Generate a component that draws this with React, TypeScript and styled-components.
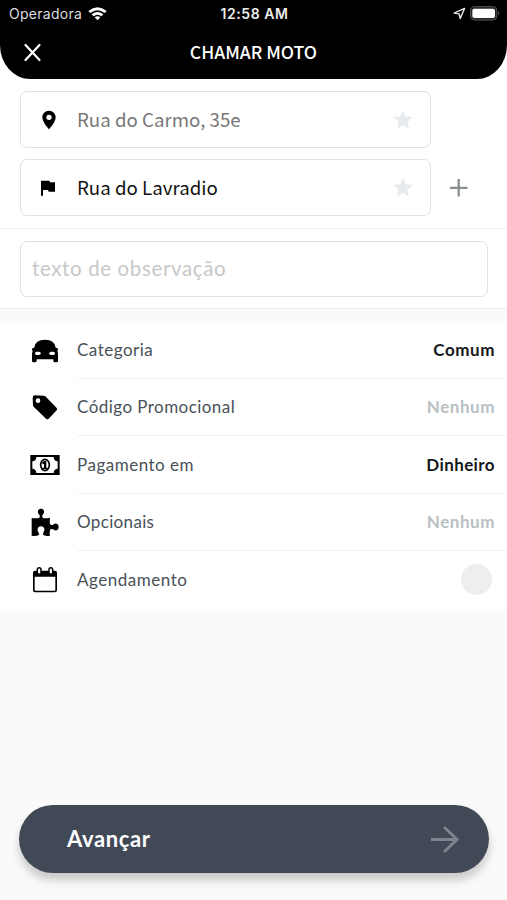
import React from "react";
import styled, { createGlobalStyle } from "styled-components";

const GlobalStyle = createGlobalStyle`
  * { box-sizing: border-box; }
  body { margin: 0; background: #fafafa; }
`;

const SYSTEM = '"Inter", "Liberation Sans", sans-serif';
const SOURCE = '"Noto Sans CJK SC", "Noto Sans", sans-serif';
const HUMANIST = '"Lato", "Open Sans", sans-serif';

const Screen = styled.div`
  width: 507px;
  height: 900px;
  display: flex;
  flex-direction: column;
  overflow: hidden;
  background: #fafafa;
  font-family: ${HUMANIST};
`;

const HeaderWrap = styled.div`
  background: #fff;
`;

const Header = styled.header`
  height: 79px;
  background: #000;
  border-radius: 0 0 30px 30px / 0 0 34px 34px;
  color: #fff;
`;

const StatusBar = styled.div`
  height: 27px;
  padding: 0 7px 0 9px;
  display: grid;
  grid-template-columns: 1fr auto 1fr;
  align-items: center;
  font-family: ${SYSTEM};
`;

const Carrier = styled.div`
  display: flex;
  align-items: center;
  gap: 6px;
  font-size: 14px;
  letter-spacing: 0.28px;
  color: #dedede;
`;

const Clock = styled.div`
  font-size: 14px;
  font-weight: 600;
  letter-spacing: 0.55px;
  color: #eee;
`;

const Indicators = styled.div`
  display: flex;
  justify-content: flex-end;
  align-items: center;
  gap: 4px;
`;

const NavBar = styled.div`
  height: 50px;
  padding: 0 23px;
  display: grid;
  grid-template-columns: 20px 1fr 20px;
  align-items: center;
`;

const Title = styled.h1`
  margin: 0;
  text-align: center;
  font: 500 17.6px/26px ${SOURCE};
`;

const IconButton = styled.button`
  padding: 0;
  border: 0;
  background: none;
  display: flex;
`;

const Addresses = styled.section`
  height: 150px;
  padding: 12px 20px 0;
  display: flex;
  flex-direction: column;
  gap: 11px;
  background: #fff;
  border-bottom: 1.5px solid #eff1f1;
`;

const AddressLine = styled.div`
  display: flex;
  align-items: center;
  gap: 18px;
`;

const Field = styled.div`
  width: 411px;
  height: 57px;
  padding: 0 17px 0 18px;
  display: flex;
  align-items: center;
  border: 1.5px solid #dfe2e2;
  border-radius: 7px;
`;

const FieldText = styled.span<{ $muted?: boolean }>`
  flex: 1;
  margin-left: 18px;
  padding-bottom: 2px;
  font: 400 18.7px/30px ${SOURCE};
  color: ${(p) => (p.$muted ? "#777" : "#111")};
`;

const Note = styled.section`
  height: 80px;
  padding: 12px 19px 0 20px;
  background: #fff;
  border-bottom: 1.5px solid #eceeee;
`;

const NoteInput = styled.input`
  display: block;
  width: 100%;
  height: 56px;
  padding: 0 11px 3px;
  border: 1.5px solid #dfe3e4;
  border-radius: 7px;
  font: 400 20.4px ${HUMANIST};
  letter-spacing: 0.68px;
  outline: none;
  &::placeholder { color: #c6c8c9; opacity: 1; }
`;

const Options = styled.section`
  margin-top: 12px;
  background: #fff;
`;

const Row = styled.div`
  height: 57.5px;
  padding-left: 30px;
  display: flex;
  align-items: center;
  gap: 17px;
`;

const RowBody = styled.div<{ $last?: boolean }>`
  flex: 1;
  height: 100%;
  padding-right: ${(p) => (p.$last ? "15px" : "12px")};
  display: flex;
  align-items: center;
  justify-content: space-between;
  border-bottom: ${(p) => (p.$last ? "0" : "1.5px solid #eff1f2")};
`;

const Label = styled.span<{ $spacing: number }>`
  font-size: 17px;
  color: #485158;
  letter-spacing: ${(p) => p.$spacing}px;
`;

const Value = styled.span<{ $empty: boolean; $spacing: number }>`
  font-size: 17px;
  font-weight: 700;
  color: ${(p) => (p.$empty ? "#b8c0c4" : "#15171a")};
  letter-spacing: ${(p) => p.$spacing}px;
`;

const Toggle = styled.button`
  width: 31px;
  height: 31px;
  padding: 0;
  border: 0;
  border-radius: 50%;
  background: #eceeef;
`;

const Footer = styled.footer`
  margin-top: auto;
  padding: 0 18px 27px 19px;
`;

const NextButton = styled.button`
  width: 100%;
  height: 68px;
  padding: 0 29px 0 48px;
  display: flex;
  align-items: center;
  justify-content: space-between;
  border: 0;
  border-radius: 34px;
  background: #414856;
  box-shadow: 0 7px 10px rgba(0, 0, 0, 0.2);
  color: #fff;
  font: 700 22px ${HUMANIST};
  letter-spacing: 0.6px;
`;

const NextLabel = styled.span`
  padding-bottom: 1px;
`;

const Wifi = () => (
  <svg width="19" height="14" viewBox="0 0 57 42" fill="#fff">
    <path d="M1 12Q28.5-10 56 12L50 18Q28.5 1 7 18Z" />
    <path d="M11 22Q28.5 8 46 22L40 28Q28.5 19 17 28Z" />
    <path d="M20 31Q28.5 24 37 31L28.5 40Z" />
  </svg>
);

const Location = () => (
  <svg width="13" height="13" viewBox="0 0 36 36" fill="none" stroke="#e4e4e4" strokeWidth="4" strokeLinejoin="round">
    <path d="M3 17L32 4L20 32L17 19Z" />
  </svg>
);

const Battery = () => (
  <svg width="30" height="15" viewBox="0 0 90 45">
    <rect x="1.5" y="2" width="79" height="40" rx="12" fill="#222" stroke="#555" strokeWidth="3" />
    <rect x="7" y="8" width="68" height="28" rx="6" fill="#fff" />
    <path d="M84 16Q90 22 84 28Z" fill="#666" />
  </svg>
);

const Close = () => (
  <svg width="19" height="19" viewBox="0 0 19 19" stroke="#fff" strokeWidth="2.2" strokeLinecap="round">
    <path d="M2.5 2L16.5 17M16.5 2L2.5 17" />
  </svg>
);

const Pin = () => (
  <svg width="20" height="20" viewBox="0 0 60 60">
    <path fillRule="evenodd" d="M30 2C18 2 10 11 10 22C10 37 30 58 30 58S50 37 50 22C50 11 42 2 30 2ZM30 14A8 8 0 1 1 30 30A8 8 0 1 1 30 14Z" />
  </svg>
);

const Flag = () => (
  <svg width="20" height="20" viewBox="0 0 60 60">
    <path d="M6 8H31L33 13H48V41H29L27 36H12V53H6Z" />
  </svg>
);

const Star = () => (
  <svg width="20" height="20" viewBox="0 0 60 60" fill="#e7ebed">
    <path d="M30 0L38 19L59 21L43 35L48 56L30 45L12 56L17 35L1 21L22 19Z" />
  </svg>
);

const Plus = () => (
  <svg width="20" height="20" viewBox="0 0 20 20" stroke="#87908f" strokeWidth="2.3">
    <path d="M1 9.8H18.5M9.7 1V18.5" />
  </svg>
);

const Arrow = () => (
  <svg width="30" height="30" viewBox="0 0 30 30" fill="none" stroke="#7d8490" strokeWidth="3">
    <path d="M1 15.5H27M14 3L27 15.5L14 28" />
  </svg>
);

const RowSvg = styled.svg.attrs({ width: 30, height: 30, viewBox: "0 0 90 90" })`
  flex: none;
  display: block;
`;

const Car = () => (
  <RowSvg>
    <path d="M13 38C15 22 26 14 45 14S75 22 77 38Q85 38 84 45L82 47Q84 53 84 60V77Q84 82 80 82H75Q70 82 70 77V73H20V77Q20 82 15 82H10Q6 82 6 77V60Q6 53 8 47L6 45Q5 38 13 38Z" />
    <rect fill="#fff" x="15" y="50" width="17" height="10" rx="5" />
    <rect fill="#fff" x="58" y="50" width="17" height="10" rx="5" />
  </RowSvg>
);

const Tag = () => (
  <RowSvg>
    <path fillRule="evenodd" d="M15 10L41 11Q44 11 46 13L80 48Q83 52 80 55L56 80Q52 84 48 80L11 44Q9 42 9 39L8 17Q8 10 15 10ZM24 19A7 7 0 1 0 24 33A7 7 0 1 0 24 19Z" />
  </RowSvg>
);

const Money = () => (
  <RowSvg>
    <path fillRule="evenodd" d="M1 15H89V75H1ZM19 21C19 29 14 34 7 34V56C14 56 19 61 19 69H71C71 61 76 56 83 56V34C76 34 71 29 71 21Z" />
    <ellipse cx="45" cy="45" rx="13" ry="17" fill="#fff" stroke="#000" strokeWidth="5" />
    <path d="M43 32H49V53H53V58H37V53H42V41L38 43L36 38Z" />
  </RowSvg>
);

const Puzzle = () => (
  <RowSvg>
    <path d="M5 33Q19 35 28 32Q32 29 27 22C20 14 25 5 33 5S46 14 39 22Q34 29 38 32Q47 35 60 32Q58 44 60 51Q63 56 69 53C77 46 86 51 86 60S77 74 69 67Q63 64 60 69Q58 76 60 86Q49 88 42 85Q37 83 40 77C47 68 42 58 33 58S19 68 26 77Q30 83 25 85Q18 88 5 86Z" />
  </RowSvg>
);

const Calendar = () => (
  <RowSvg>
    <path fillRule="evenodd" d="M15 17H75Q81 17 81 23V75Q81 82 75 82H15Q9 82 9 75V23Q9 17 15 17ZM14 35V74Q14 77 17 77H73Q76 77 76 74V35Z" />
    <rect x="22" y="8" width="11" height="20" rx="5.5" fill="#fff" stroke="#000" strokeWidth="4.5" />
    <rect x="57" y="8" width="11" height="20" rx="5.5" fill="#fff" stroke="#000" strokeWidth="4.5" />
  </RowSvg>
);

const options = [
  { icon: <Car />, label: "Categoria", spacing: 0.5, value: "Comum", valueSpacing: 0.55 },
  { icon: <Tag />, label: "Código Promocional", spacing: 0.45, value: "Nenhum", empty: true, valueSpacing: 0.55 },
  { icon: <Money />, label: "Pagamento em", spacing: 0.5, value: "Dinheiro", valueSpacing: 0.4 },
  { icon: <Puzzle />, label: "Opcionais", spacing: 0.35, value: "Nenhum", empty: true, valueSpacing: 0.55 },
];

export default function App() {
  return (
    <Screen>
      <GlobalStyle />
      <HeaderWrap>
        <Header>
          <StatusBar>
            <Carrier>Operadora <Wifi /></Carrier>
            <Clock>12:58 AM</Clock>
            <Indicators><Location /><Battery /></Indicators>
          </StatusBar>
          <NavBar>
            <IconButton aria-label="Fechar"><Close /></IconButton>
            <Title>CHAMAR MOTO</Title>
          </NavBar>
        </Header>
      </HeaderWrap>
      <Addresses>
        <AddressLine>
          <Field><Pin /><FieldText $muted>Rua do Carmo, 35e</FieldText><Star /></Field>
        </AddressLine>
        <AddressLine>
          <Field><Flag /><FieldText>Rua do Lavradio</FieldText><Star /></Field>
          <IconButton aria-label="Adicionar"><Plus /></IconButton>
        </AddressLine>
      </Addresses>
      <Note>
        <NoteInput placeholder="texto de observação" />
      </Note>
      <Options>
        {options.map((o) => (
          <Row key={o.label}>
            {o.icon}
            <RowBody>
              <Label $spacing={o.spacing}>{o.label}</Label>
              <Value $empty={!!o.empty} $spacing={o.valueSpacing}>{o.value}</Value>
            </RowBody>
          </Row>
        ))}
        <Row>
          <Calendar />
          <RowBody $last>
            <Label $spacing={0.53}>Agendamento</Label>
            <Toggle aria-label="Agendamento" />
          </RowBody>
        </Row>
      </Options>
      <Footer>
        <NextButton><NextLabel>Avançar</NextLabel><Arrow /></NextButton>
      </Footer>
    </Screen>
  );
}
